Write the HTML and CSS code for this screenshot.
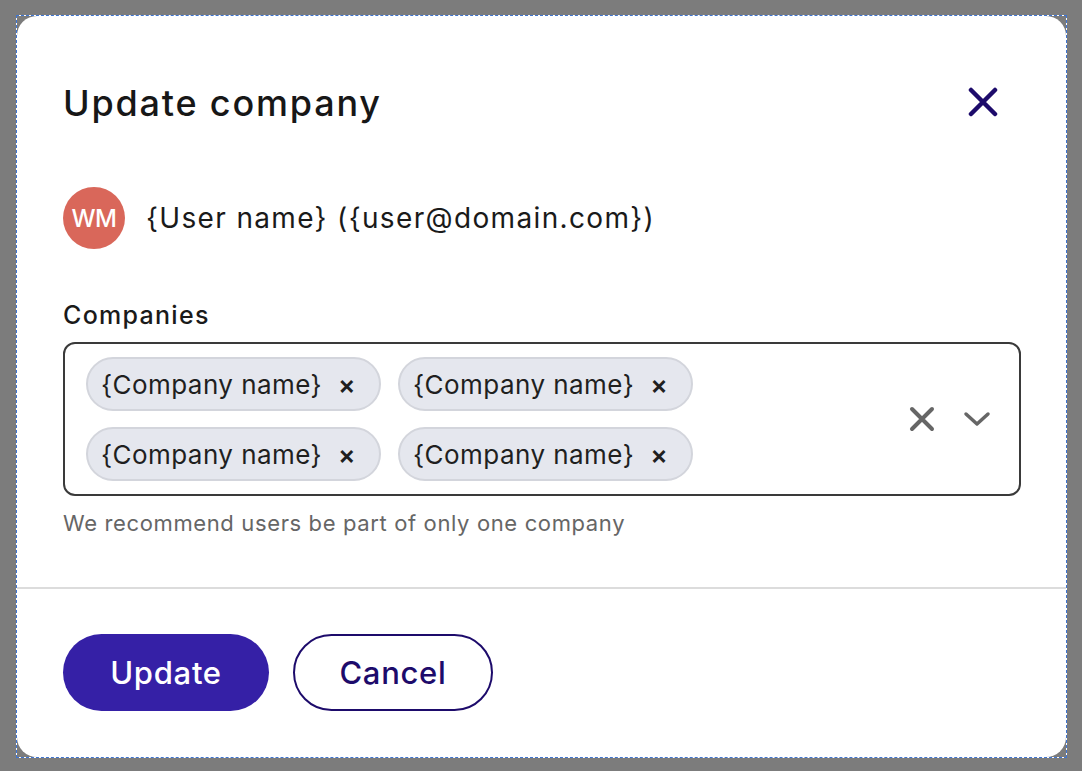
FILE: index.html
```html
<!DOCTYPE html>
<html lang="en">
<head>
<meta charset="utf-8">
<title>Update company</title>
<link rel="stylesheet" href="styles.css">
</head>
<body>
<div class="frame">
  <div class="dialog" role="dialog" aria-labelledby="dlg-title">
    <div class="dialog-body">
      <header class="dialog-header">
        <h1 id="dlg-title" class="dialog-title">Update company</h1>
        <button class="close-btn" aria-label="Close">
          <svg width="30" height="30" viewBox="0 0 30 30"><path d="M3 3 L27 27 M27 3 L3 27" stroke="#1d0b6b" stroke-width="4.5" stroke-linecap="round" fill="none"/></svg>
        </button>
      </header>
      <div class="user-row">
        <span class="avatar">WM</span>
        <span class="user-text">{User name} ({user@domain.com})</span>
      </div>
      <label class="field-label">Companies</label>
      <div class="select">
        <div class="chips">
          <span class="chip">{Company name}<span class="chip-x">×</span></span>
          <span class="chip">{Company name}<span class="chip-x">×</span></span>
          <span class="chip">{Company name}<span class="chip-x">×</span></span>
          <span class="chip">{Company name}<span class="chip-x">×</span></span>
        </div>
        <div class="select-icons">
          <svg width="26" height="26" viewBox="0 0 26 26"><path d="M3 3 L23 23 M23 3 L3 23" stroke="#666" stroke-width="4" stroke-linecap="round" fill="none"/></svg>
          <svg width="28" height="18" viewBox="0 0 28 18"><path d="M3 4 L14 14 L25 4" stroke="#666" stroke-width="3.5" stroke-linecap="round" stroke-linejoin="round" fill="none"/></svg>
        </div>
      </div>
      <p class="helper">We recommend users be part of only one company</p>
    </div>
    <footer class="dialog-footer">
      <button class="btn btn-primary">Update</button>
      <button class="btn btn-secondary">Cancel</button>
    </footer>
  </div>
</div>
</body>
</html>
```
FILE: styles.css
```css
* { box-sizing: border-box; }
html, body { margin: 0; height: 100%; }
body {
  background: #7c7c7c;
  padding: 15px 0 0 16px;
  font-family: Inter, "Noto Sans", sans-serif;
  color: #1a1a1a;
}
.frame {
  width: 1051px;
  height: 743px;
  border: 1px dashed #3f74cf;
  background: linear-gradient(#7c7c7c, #7c7c7c) padding-box, linear-gradient(#fff, #fff) border-box;
}
.dialog {
  width: 100%;
  height: 100%;
  background: #fff;
  border-radius: 20px;
  display: flex;
  flex-direction: column;
}
.dialog-body {
  padding: 0 46px 0 46px;
  border-bottom: 2px solid #dcdcdc;
  height: 573px;
}
.dialog-header {
  display: flex;
  justify-content: space-between;
  align-items: center;
  height: 173px;
}
.dialog-title {
  margin: 0;
  font-size: 36px;
  font-weight: 500;
  letter-spacing: 1.8px;
  color: #171717;
}
.close-btn {
  background: none;
  border: 0;
  padding: 0;
  margin-right: 22px;
  margin-top: -2px;
  width: 30px;
  height: 30px;
  display: flex;
}
.user-row {
  display: flex;
  align-items: center;
  gap: 21px;
  margin-top: -2px;
}
.avatar {
  width: 62px;
  height: 62px;
  border-radius: 50%;
  background: #d9675a;
  color: #fff;
  font-size: 24px;
  font-weight: 500;
  display: flex;
  align-items: center;
  justify-content: center;
  letter-spacing: -0.5px;
}
.user-text {
  font-size: 28px;
  letter-spacing: 1.35px;
  color: #1a1a1a;
}
.field-label {
  display: block;
  margin-top: 51px;
  font-size: 25px;
  font-weight: 500;
  letter-spacing: 1.3px;
  color: #1a1a1a;
  line-height: 30px;
}
.select {
  margin-top: 12px;
  width: 958px;
  height: 154px;
  border: 2px solid #3a3a3a;
  border-radius: 12px;
  display: flex;
  align-items: center;
  justify-content: space-between;
  padding: 0 28px 0 21px;
}
.chips {
  display: grid;
  grid-template-columns: repeat(2, max-content);
  gap: 16px 17px;
}
.chip {
  display: inline-flex;
  align-items: center;
  height: 54px;
  padding: 0 23px 0 13px;
  background: #e5e7ee;
  border: 2px solid #d3d5dc;
  border-radius: 27px;
  font-size: 26px;
  letter-spacing: 0.45px;
  color: #1f1f1f;
}
.chip-x {
  margin-left: 16px;
  font-size: 26px;
  font-weight: 600;
}
.select-icons {
  display: flex;
  align-items: center;
  gap: 28px;
}
.helper {
  margin: 14px 0 0 0;
  font-size: 22px;
  letter-spacing: 0.63px;
  color: #666;
}
.dialog-footer {
  display: flex;
  gap: 24px;
  padding: 45px 46px 0 46px;
}
.btn {
  height: 77px;
  border-radius: 39px;
  font-family: Inter, "Noto Sans", sans-serif;
  font-size: 31px;
  font-weight: 500;
  letter-spacing: 0.7px;
  cursor: pointer;
}
.btn-primary {
  width: 206px;
  background: #3520a6;
  color: #fff;
  border: 0;
}
.btn-secondary {
  width: 200px;
  background: #fff;
  color: #1d0b6b;
  border: 2px solid #1d0b6b;
}
```
